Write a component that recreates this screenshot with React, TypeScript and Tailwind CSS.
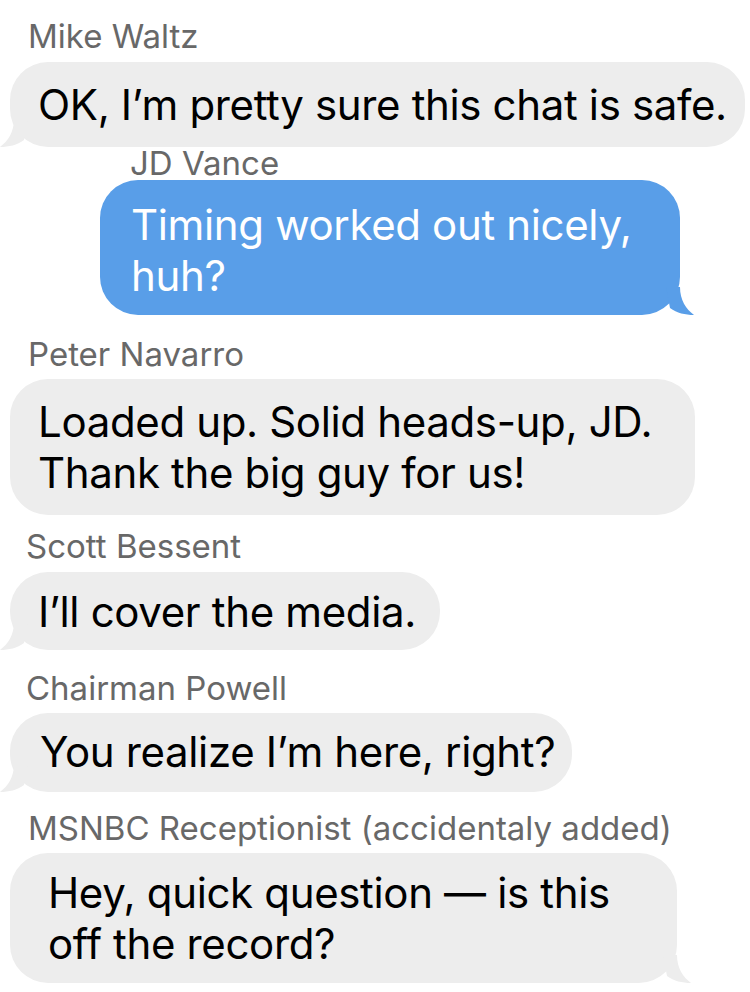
import React from 'react';

const GRAY = '#ededed';
const BLUE = '#599ee8';

const TailLeft: React.FC<{ color: string }> = ({ color }) => (
  <svg
    className="absolute left-[-10px] bottom-0"
    width="28"
    height="28"
    viewBox="0 0 28 28"
  >
    <path d="M14 0 C14 13 8 22 0 28 C9 28 17 26 24 21 L28 0 Z" fill={color} />
  </svg>
);

const TailRight: React.FC<{ color: string }> = ({ color }) => (
  <svg
    className="absolute right-[-14px] bottom-0"
    width="28"
    height="28"
    viewBox="0 0 28 28"
  >
    <path d="M14 0 C14 13 20 22 28 28 C19 28 11 26 4 21 L0 0 Z" fill={color} />
  </svg>
);

const Name: React.FC<{ children: React.ReactNode; className?: string }> = ({
  children,
  className = '',
}) => (
  <div className={`text-[33px] leading-[34px] text-[#686868] tracking-[0px] ${className}`}>
    {children}
  </div>
);

const Bubble: React.FC<{
  children: React.ReactNode;
  className?: string;
  tail?: 'left' | 'right' | 'none';
  blue?: boolean;
}> = ({ children, className = '', tail = 'left', blue = false }) => {
  const color = blue ? BLUE : GRAY;
  return (
    <div
      className={`relative rounded-[38px] text-[42px] leading-[51px] tracking-[-0.35px] ${
        blue ? 'bg-[#599ee8] text-white' : 'bg-[#ededed] text-black'
      } ${className}`}
    >
      {children}
      {tail === 'left' && <TailLeft color={color} />}
      {tail === 'right' && <TailRight color={color} />}
    </div>
  );
};

export default function App() {
  return (
    <div className="w-[750px] h-[992px] overflow-hidden bg-white font-['Inter',sans-serif]">
      <Name className="pl-[28px] pt-[19px]">Mike Waltz</Name>
      <Bubble className="ml-[10px] mr-[5px] mt-[9px] h-[85px] pl-[28px] pt-[17px]">
        OK, I’m pretty sure this chat is safe.
      </Bubble>

      <Name className="pl-[130px] mt-[-1px]">JD Vance</Name>
      <Bubble
        blue
        tail="right"
        className="ml-[100px] w-[580px] h-[135px] pl-[31px] pt-[19px]"
      >
        Timing worked out nicely,
        <br />
        huh?
      </Bubble>

      <Name className="pl-[28px] mt-[22px]">Peter Navarro</Name>
      <Bubble
        tail="none"
        className="ml-[10px] w-[685px] mt-[8px] h-[136px] pl-[28px] pt-[17px]"
      >
        Loaded up. Solid heads-up, JD.
        <br />
        Thank the big guy for us!
      </Bubble>

      <Name className="pl-[26px] mt-[14px]">Scott Bessent</Name>
      <Bubble className="ml-[10px] w-[430px] mt-[9px] h-[78px] pl-[28px] pt-[14px]">
        I’ll cover the media.
      </Bubble>

      <Name className="pl-[26px] mt-[21px]">Chairman Powell</Name>
      <Bubble className="ml-[10px] w-[562px] mt-[8px] h-[79px] pl-[30px] pt-[13px]">
        You realize I’m here, right?
      </Bubble>

      <Name className="pl-[28px] mt-[19px]">MSNBC Receptionist (accidentaly added)</Name>
      <Bubble
        tail="right"
        className="ml-[10px] w-[667px] mt-[8px] h-[130px] pl-[38px] pt-[14px]"
      >
        Hey, quick question — is this
        <br />
        off the record?
      </Bubble>
    </div>
  );
}
